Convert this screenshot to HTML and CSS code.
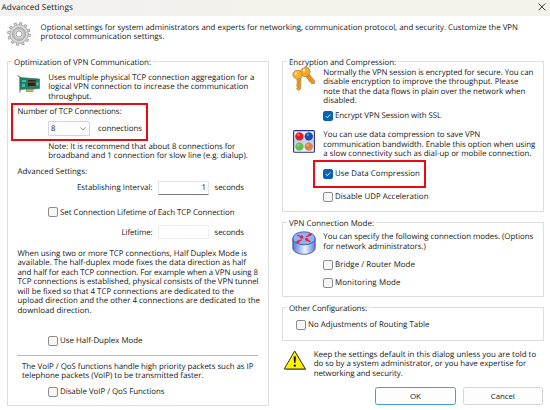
FILE: index.html
```html
<!DOCTYPE html>
<html lang="en">
<head>
<meta charset="utf-8">
<title>Advanced Settings</title>
<link rel="stylesheet" href="styles.css">
</head>
<body>
<header class="titlebar"><span class="title" data-w="71.5">Advanced Settings</span>
<svg class="close" viewBox="0 0 8 8"><path d="M.6.6 7.2 7.2M7.2.6.6 7.2" stroke="#222" stroke-width=".9"/></svg></header>

<section class="intro">
<svg class="gear" viewBox="0 0 24 24"><circle cx="12" cy="12" r="10.3" fill="none" stroke="#8a8a8a" stroke-width="2.8" stroke-dasharray="2.7 2.69"/><circle cx="12" cy="12" r="9.3" fill="#dadada" stroke="#8c8c8c" stroke-width=".7"/><circle cx="12" cy="12" r="10.2" fill="none" stroke="#d8d8d8" stroke-width="1.9" stroke-dasharray="1.6 3.74" stroke-dashoffset="-.5"/><circle cx="12" cy="12" r="6.4" fill="#c8c8c8" stroke="#8a8a8a" stroke-width=".7"/><circle cx="12" cy="12" r="4.8" fill="#e2e2e2" stroke="#aaa" stroke-width=".6"/><circle cx="12" cy="12" r="3" fill="#fff" stroke="#909090" stroke-width=".8"/></svg>
<p class="text"><span data-w="477.5">Optional settings for system administrators and experts for networking, communication protocol, and security. Customize the VPN</span><span data-w="124">protocol communication settings.</span></p>
</section>

<main class="columns">
<section class="group optimization">
<h2><span data-w="137">Optimization of VPN Communication:</span></h2>
<div class="described adapter">
<svg class="nic" viewBox="0 0 24 20"><path d="M.5 1.5 3 3v15.5" fill="none" stroke="#888" stroke-width="1.3"/><path d="M3 3.5 22.5 5v9.5L16 15v2.5H9.5V15L3 15.5z" fill="#16836a" stroke="#3b6656" stroke-width=".6"/><path d="M11 6h7.5v6H11z" fill="#2a2522"/><path d="M11 8h7.5M13 12.5h6" stroke="#875f3d"/><path d="M5 6h4v2H5zM5 10h3v3H5z" fill="#50b998"/><path d="M9.5 15.5H16v2H9.5z" fill="#d5bd5f"/><path d="M19.5 8.5h2v3h-2z" fill="#67c4a6"/></svg>
<p class="text"><span data-w="206">Uses multiple physical TCP connection aggregation for a</span><span data-w="200">logical VPN connection to increase the communication</span><span data-w="43">throughput.</span></p>
</div>
<div class="highlight tcp">
<p class="text"><span data-w="104">Number of TCP Connections:</span></p>
<div class="count"><div class="select"><span>8</span><svg viewBox="0 0 6 4"><path d="m.4.5 2.6 2.6L5.6.5" fill="none" stroke="#555" stroke-width=".7"/></svg></div><span class="unit" data-w="44">connections</span></div>
</div>
<p class="text note"><span data-w="187">Note: It is recommend that about 8 connections for</span><span data-w="199.5">broadband and 1 connection for slow line (e.g. dialup).</span></p>
<p class="text subhead"><span data-w="69.5">Advanced Settings:</span></p>
<div class="field interval"><span data-w="75.5">Establishing Interval:</span><div class="input"><span>1</span></div><span class="unit" data-w="29.5">seconds</span></div>
<label class="check lifetime-check"><i class="box"></i><span data-w="174.5">Set Connection Lifetime of Each TCP Connection</span></label>
<div class="field lifetime"><span data-w="31">Lifetime:</span><div class="input disabled"></div><span class="unit" data-w="29.5">seconds</span></div>
<p class="text duplex"><span data-w="229.5">When using two or more TCP connections, Half Duplex Mode is</span><span data-w="228.5">available. The half-duplex mode fixes the data direction as half</span><span data-w="240.5">and half for each TCP connection. For example when a VPN using 8</span><span data-w="241">TCP connections is established, physical consists of the VPN tunnel</span><span data-w="216.5">will be fixed so that 4 TCP connections are dedicated to the</span><span data-w="242.5">upload direction and the other 4 connections are dedicated to the</span><span data-w="74">download direction.</span></p>
<label class="check duplex-check"><i class="box"></i><span data-w="82.5">Use Half-Duplex Mode</span></label>
<hr>
<p class="text voip"><span data-w="231.5">The VoIP / QoS functions handle high priority packets such as IP</span><span data-w="181.5">telephone packets (VoIP) to be transmitted faster.</span></p>
<label class="check voip-check"><i class="box"></i><span data-w="104.5">Disable VoIP / QoS Functions</span></label>
</section>

<div class="side">
<section class="group encryption">
<h2><span data-w="107">Encryption and Compression:</span></h2>
<div class="described">
<svg class="keys" viewBox="0 0 24 24"><g stroke="#a77b46" stroke-width=".7"><path d="m12.5 7 3-2 7.2 9-.2 2.4-3 .4-.8-2-1.7-.3v-2l-1.7-.7z" fill="#f39a18"/><path d="M9 2.5 12.5.5l4 .3 1.8 4-2.2 4.3-4.2.7L8 7z" fill="#fba922"/><path d="m5 11 4-1-.4 12-2 1.4-2-1.4 1-2-1.3-1.4 1-1.6z" fill="#f8a220"/><path d="m1 6 2.7-2.7 4.2.3L10.3 7l-1.6 4.5-4 .7L1 9.5z" fill="#ffb02a"/></g><circle cx="12" cy="3.2" r="1" fill="#fff"/><circle cx="4" cy="6.4" r="1" fill="#fff"/><path d="m7 13-.2 8M15 8.5l5.3 6" stroke="#d97900" stroke-width=".8"/></svg>
<p class="text"><span data-w="210">Normally the VPN session is encrypted for secure. You can</span><span data-w="195">disable encryption to improve the throughput. Please</span><span data-w="202">note that the data flows in plain over the network when</span><span data-w="33.5">disabled.</span></p>
</div>
<label class="check ssl"><i class="box on"><svg viewBox="0 0 10 10"><path d="m2.8 5.1 1.5 1.5 3-3.1"/></svg></i><span data-w="106">Encrypt VPN Session with SSL</span></label>
<div class="described compression">
<svg class="balls" viewBox="0 0 22 23"><defs><linearGradient id="pane" x2="0" y2="1"><stop stop-color="#fff"/><stop offset=".5" stop-color="#c6cce5"/><stop offset="1" stop-color="#fff"/></linearGradient></defs><rect x=".6" y=".6" width="20.8" height="21.6" rx="1" fill="url(#pane)" stroke="#272a91" stroke-width="1.1"/><circle cx="6.4" cy="6.4" r="4.2" fill="#d91c25"/><circle cx="15.8" cy="6.4" r="4.2" fill="#174bb0"/><circle cx="6.4" cy="16.6" r="4.2" fill="#62bd52"/><circle cx="15.8" cy="16.6" r="4.2" fill="#db8345"/><g fill="#fff" opacity=".3"><circle cx="5.4" cy="4.9" r="1.4"/><circle cx="14.8" cy="4.9" r="1.4"/><circle cx="5.4" cy="15.1" r="1.4"/><circle cx="14.8" cy="15.1" r="1.4"/></g></svg>
<p class="text"><span data-w="157">You can use data compression to save VPN</span><span data-w="212">communication bandwidth. Enable this option when using</span><span data-w="208">a slow connectivity such as dial-up or mobile connection.</span></p>
</div>
<div class="highlight compress"><label class="check"><i class="box on"><svg viewBox="0 0 10 10"><path d="m2.8 5.1 1.5 1.5 3-3.1"/></svg></i><span data-w="85">Use Data Compression</span></label></div>
<label class="check udp"><i class="box"></i><span data-w="93.5">Disable UDP Acceleration</span></label>
</section>

<section class="group mode">
<h2><span data-w="85">VPN Connection Mode:</span></h2>
<div class="described">
<svg class="router" viewBox="0 0 24 24"><defs><linearGradient id="drum"><stop stop-color="#4f7ae0"/><stop offset=".55" stop-color="#eaf2ff"/><stop offset="1" stop-color="#5a80e0"/></linearGradient></defs><path d="M.8 7.5V17c0 3.5 5 6.3 11.2 6.3S23.2 20.500 23.2 17V7.500z" fill="url(#drum)" stroke="#384a91" stroke-width=".8"/><ellipse cx="12" cy="7.300" rx="11.200" ry="6.500" fill="#8fb0fa" stroke="#33488f" stroke-width=".8"/><g stroke="#e51e2b" stroke-width="1.300" fill="#e51e2b"><path d="m5.500 4 4.800 2.300M19 3.500l-5 2.500M18.500 10.800 14 8.500M5 11l5-2.500"/><path d="M11.300 7.200 8 7l2-2.800zM20 2.800l-3.700.2L18 5zM13 7.600l3.400.2-2 2.400zM4 11.500l3.700-.1-1.800-2z" stroke-width=".5"/></g></svg>
<p class="text"><span data-w="210">You can specify the following connection modes. (Options</span><span data-w="102.500">for network administrators.)</span></p>
</div>
<label class="check bridge"><i class="box"></i><span data-w="80">Bridge / Router Mode</span></label>
<label class="check monitoring"><i class="box"></i><span data-w="65.500">Monitoring Mode</span></label>
</section>

<section class="group other">
<h2><span data-w="78">Other Configurations:</span></h2>
<label class="check routing"><i class="box"></i><span data-w="121.500">No Adjustments of Routing Table</span></label>
</section>

<div class="warning">
<svg viewBox="0 0 24 21"><path d="M13 2.500 23.500 20H3z" fill="#999"/><path d="M11.700 1 22.300 19H1.200z" fill="#fff200" stroke="#333" stroke-width="1" stroke-linejoin="round"/><path d="M10.600 6.500h2.400l-.6 6.500h-1.200z" fill="#111"/><circle cx="11.800" cy="15.600" r="1.200" fill="#111"/></svg>
<p class="text"><span data-w="222.500">Keep the settings default in this dialog unless you are told to</span><span data-w="212.500">do so by a system administrator, or you have expertise for</span><span data-w="89">networking and security.</span></p>
</div>
<div class="actions"><button class="primary"><span data-w="10.500">OK</span></button><button><span data-w="24">Cancel</span></button></div>
</div>
</main>
<script src="fit.js"></script>
</body>
</html>
```
FILE: styles.css
```css
* { box-sizing: border-box; }
body { margin: 0; width: 550px; height: 410px; overflow: hidden; background: #fff; color: #202020; font: 7.9px/9.45px "Open Sans", "Noto Sans", sans-serif; text-rendering: geometricPrecision; }
svg { display: block; flex: none; }
p, h2 { margin: 0; font: inherit; }
span { display: inline-block; white-space: nowrap; transform: translateY(1px); }
.titlebar { height: 16px; padding: 0 4px 0 1.5px; display: flex; align-items: center; justify-content: space-between; background: linear-gradient(90deg, #f2f2f1, #f5f1eb 50%, #f5f1eb); }
.title { font-size: 8.2px; margin-top: -2px; }
.close { width: 8px; height: 8px; margin-top: -3px; }
.text span { display: block; width: max-content; }
.intro { display: flex; height: 45px; padding: 6px 0 0 7px; }
.gear { width: 24px; height: 24px; margin-right: 9.5px; }
.intro .text { margin-top: 1px; }
.columns { display: flex; gap: 13px; padding-left: 7px; }
.group { width: 262px; border: 1px solid #dedede; display: flex; flex-direction: column; align-items: flex-start; }
.group h2 { height: 10px; flex: none; margin: -5px 0 0 4px; padding: 0 2px; background: #fff; line-height: 10px; }
.optimization { height: 345px; }
.described { display: flex; padding-left: 9px; }
.described > svg { margin-right: 7.3px; width: 24px; }
.adapter { padding-top: 5.8px; }
.nic { height: 20px; margin-top: 1px; }
.highlight { border: 2px solid #e80c12; }
.tcp { width: 137px; height: 38px; margin: 1.8px 0 0 3px; padding: 2px 0 0 4.5px; }
.count { display: flex; align-items: center; margin: 5px 0 0 30.5px; height: 15px; }
.select { width: 42px; height: 15px; border: 1px solid #d5d5d5; border-radius: 1px; padding: 0 3px 0 2px; display: flex; align-items: center; justify-content: space-between; background: #fdfdfd; }
.select svg { width: 6px; height: 4px; }
.count .unit { margin-left: 8px; }
.note { margin: .8px 0 0 40.3px; }
.subhead { margin: 6.6px 0 0 9.5px; }
.field { display: flex; align-items: center; justify-content: flex-end; width: 236px; height: 14px; }
.interval { margin-top: 4.2px; }
.input { width: 51px; height: 14px; margin: 0 5.5px; padding: 1px 2px 0 0; border: 1px solid #e5e5e5; border-bottom-color: #777; border-radius: 1px; text-align: right; }
.input.disabled { border-color: #eee; }
.check { display: flex; align-items: center; height: 10px; margin-left: 40px; }
.box { width: 10px; height: 10px; margin-right: 2px; border: 1px solid #8d8d8d; border-radius: 2px; background: #f7f7f7; flex: none; }
.box.on { background: #0864b5; border-color: #0864b5; }
.box svg { width: 10px; height: 10px; margin: -1px; fill: none; stroke: #fff; stroke-width: .9; }
.lifetime-check { margin-top: 12.5px; }
.lifetime { margin-top: 8px; }
.duplex { margin: 9.5px 0 0 9.5px; }
.duplex-check { margin-top: 21px; }
hr { width: 241px; height: 1px; border: 0; background: #b8b8b8; margin: 8.8px 0 0 9px; flex: none; }
.voip { margin: 5.8px 0 0 14px; }
.voip-check { margin-top: 6.3px; }
.encryption { height: 151px; }
.encryption .described { padding-top: .8px; }
.keys { height: 24px; margin-top: -.5px; }
.ssl { margin-top: 5.6px; }
.encryption .compression { padding: 9px 0 0 10px; }
.balls { height: 23px; }
.compression > .balls { width: 22px; margin-right: 8.3px; }
.compress { width: 113px; height: 28px; margin: 1.5px 0 0 30px; padding: 7px 0 0 8px; }
.compress .check { margin-left: 0; }
.udp { margin-top: 3.7px; }
.mode { height: 75px; margin-top: 10px; }
.mode .described { padding-top: 4.3px; }
.router { height: 24px; margin-top: -1.5px; }
.bridge { margin-top: 5.1px; }
.monitoring { margin-top: 8px; }
.other { height: 34px; margin-top: 10px; }
.routing { margin: 7px 0 0 13px; }
.warning { display: flex; height: 38px; padding: 8.6px 0 0 1px; }
.warning svg { width: 24px; height: 21px; margin-right: 6.7px; }
.actions { display: flex; gap: 7px; margin: 8px 0 0 93px; }
button { width: 80.5px; height: 18px; padding: 0; border: 1px solid #d4d4d4; border-radius: 2.5px; background: #fdfdfd; color: inherit; font: inherit; }
button.primary { border-color: #489bdc; }
```
FILE: fit.js
```js
document.querySelectorAll('[data-w]').forEach(function (el) {
  var natural = el.getBoundingClientRect().width;
  el.style.letterSpacing = (el.dataset.w - natural) / el.textContent.length + 'px';
});
```
